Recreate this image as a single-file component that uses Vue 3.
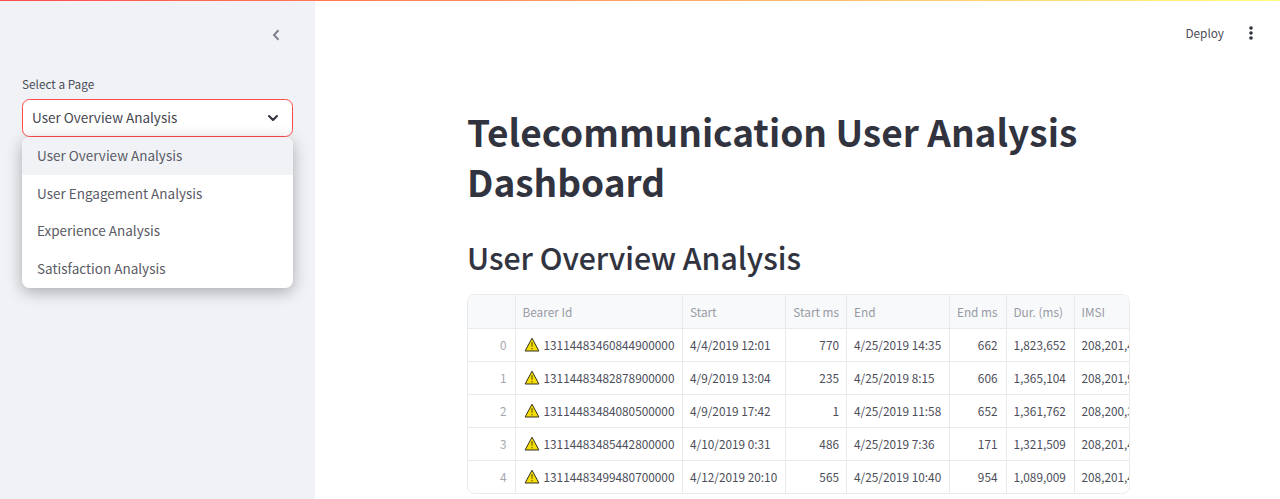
<script setup>
const options = [
  'User Overview Analysis',
  'User Engagement Analysis',
  'Experience Analysis',
  'Satisfaction Analysis',
]
const columns = ['', 'Bearer Id', 'Start', 'Start ms', 'End', 'End ms', 'Dur. (ms)', 'IMSI']
const rows = [
  ['0', '13114483460844900000', '4/4/2019 12:01', '770', '4/25/2019 14:35', '662', '1,823,652', '208,201,4'],
  ['1', '13114483482878900000', '4/9/2019 13:04', '235', '4/25/2019 8:15', '606', '1,365,104', '208,201,9'],
  ['2', '13114483484080500000', '4/9/2019 17:42', '1', '4/25/2019 11:58', '652', '1,361,762', '208,200,3'],
  ['3', '13114483485442800000', '4/10/2019 0:31', '486', '4/25/2019 7:36', '171', '1,321,509', '208,201,4'],
  ['4', '13114483499480700000', '4/12/2019 20:10', '565', '4/25/2019 10:40', '954', '1,089,009', '208,201,4'],
]
const rightAligned = [0, 3, 5]
</script>

<template>
  <div class="app">
    <div class="decoration"></div>
    <aside class="sidebar">
      <div class="sidebar-top">
        <svg class="collapse" width="8" height="12" viewBox="0 0 8 12">
          <path d="M6.5 1.2 2 6l4.5 4.8" fill="none" stroke="#80838f" stroke-width="2" />
        </svg>
      </div>
      <label class="label">Select a Page</label>
      <div class="select">
        <span class="value">User Overview Analysis</span>
        <svg class="chevron" width="12" height="8" viewBox="0 0 12 8">
          <path d="M2 2l4 4 4-4" fill="none" stroke="#31333f" stroke-width="2.1" stroke-linecap="round" stroke-linejoin="round" />
        </svg>
        <ul class="menu">
          <li v-for="(o, i) in options" :key="o" :class="{ active: i === 0 }">{{ o }}</li>
        </ul>
      </div>
    </aside>
    <main class="main">
      <header class="toolbar">
        <span class="deploy">Deploy</span>
        <svg width="6" height="16" viewBox="0 0 6 16" fill="#31333f">
          <circle cx="3" cy="3" r="1.8" />
          <circle cx="3" cy="8" r="1.8" />
          <circle cx="3" cy="13" r="1.8" />
        </svg>
      </header>
      <div class="content">
        <h1>Telecommunication User Analysis<br />Dashboard</h1>
        <h2>User Overview Analysis</h2>
        <div class="frame">
          <div class="row head">
            <div v-for="(c, i) in columns" :key="i" class="cell" :class="{ right: rightAligned.includes(i) }">{{ c }}</div>
          </div>
          <div v-for="r in rows" :key="r[0]" class="row">
            <div v-for="(c, i) in r" :key="i" class="cell" :class="{ right: rightAligned.includes(i), index: i === 0 }">
              <svg v-if="i === 1" class="warn" width="16" height="15" viewBox="0 0 16 15">
                <path d="M8 1.2 14.9 14H1.1Z" fill="#f5dc05" stroke="#33331f" stroke-width="1" stroke-linejoin="round" />
                <path d="M7.3 5.3h1.4l-.35 4.8h-.7z" fill="#5c5410" />
                <circle cx="8" cy="11.8" r=".7" fill="#5c5410" />
              </svg>
              <span>{{ c }}</span>
            </div>
          </div>
        </div>
      </div>
    </main>
  </div>
</template>

<style>
body {
  margin: 0;
  overflow: hidden;
}
</style>

<style scoped>
.app {
  position: relative;
  display: flex;
  width: 1280px;
  height: 499px;
  overflow: hidden;
  background: #fff;
  color: #31333f;
  font-family: "Noto Sans CJK SC", "Noto Sans", sans-serif;
}
.decoration {
  position: absolute;
  top: 0;
  left: 0;
  right: 0;
  height: 1px;
  background: linear-gradient(90deg, #ff4b4b, #fffd80);
}
.sidebar {
  box-sizing: border-box;
  width: 315px;
  flex: none;
  padding: 0 22px;
  background: #f0f2f6;
}
.sidebar-top {
  display: flex;
  justify-content: flex-end;
  align-items: center;
  height: 70px;
  padding-right: 13px;
}
.collapse {
  display: block;
}
.label {
  display: block;
  height: 29px;
  line-height: 27px;
  font-size: 11.8px;
  color: #4a4c57;
}
.select {
  position: relative;
  box-sizing: border-box;
  display: flex;
  align-items: center;
  justify-content: space-between;
  width: 271px;
  height: 37.6px;
  padding: 0 13px 0 9px;
  border: 1px solid #ff4b4b;
  border-radius: 7.5px;
  background: #fff;
  font-size: 13.5px;
  line-height: 20px;
}
.value {
  padding-bottom: 1px;
  color: #44464f;
}
.menu {
  position: absolute;
  top: 37px;
  left: -1px;
  width: 271px;
  margin: 0;
  padding: 0;
  list-style: none;
  overflow: hidden;
  border-radius: 7.5px;
  background: #fff;
  box-shadow: 0 4px 16px rgba(0, 0, 0, 0.3);
}
.menu li {
  height: 37.65px;
  padding-left: 15px;
  line-height: 37.65px;
  color: #5a5b65;
}
.menu .active {
  background: #f0f2f6;
}
.main {
  flex: 1;
  min-width: 0;
}
.toolbar {
  display: flex;
  justify-content: flex-end;
  align-items: center;
  gap: 24px;
  height: 66px;
  padding-right: 26px;
}
.deploy {
  font-size: 11.8px;
  line-height: 20px;
  color: #4a4c57;
}
.content {
  width: 663px;
  margin-left: 152px;
  padding-top: 40px;
}
h1 {
  margin: 0;
  font-size: 37px;
  line-height: 50px;
  font-weight: 700;
  white-space: nowrap;
}
h2 {
  margin: 30px 0 16px;
  font-size: 30.2px;
  line-height: 42px;
  font-weight: 500;
  -webkit-text-stroke: 0.1px #31333f;
  white-space: nowrap;
}
.frame {
  box-sizing: border-box;
  width: 663px;
  height: 199.5px;
  overflow: hidden;
  border: 1px solid #e9eaec;
  border-radius: 7.5px;
}
.row {
  display: grid;
  grid-template-columns: 48px 167.5px 103px 61px 103px 56.5px 68px 56px;
  height: 33px;
  margin-left: -0.5px;
  font-size: 11.8px;
  line-height: 31px;
  color: #4c4e59;
}
.cell {
  box-sizing: border-box;
  display: flex;
  align-items: center;
  overflow: hidden;
  padding: 0 7px 1px;
  border-right: 1px solid #e9eaec;
  border-bottom: 1px solid #e9eaec;
  white-space: nowrap;
}
.cell:last-child {
  border-right: 0;
  padding-right: 0;
}
.cell:nth-child(6) {
  padding-right: 8px;
}
.row:last-child .cell {
  border-bottom-color: transparent;
}
.right {
  justify-content: flex-end;
}
.head {
  height: 34px;
  background: #f8f9fb;
  color: #979aa3;
}
.index {
  padding-right: 8px;
  color: #a4a7ae;
}
.warn {
  flex: none;
  margin: 0 4px 0 1px;
}
</style>
